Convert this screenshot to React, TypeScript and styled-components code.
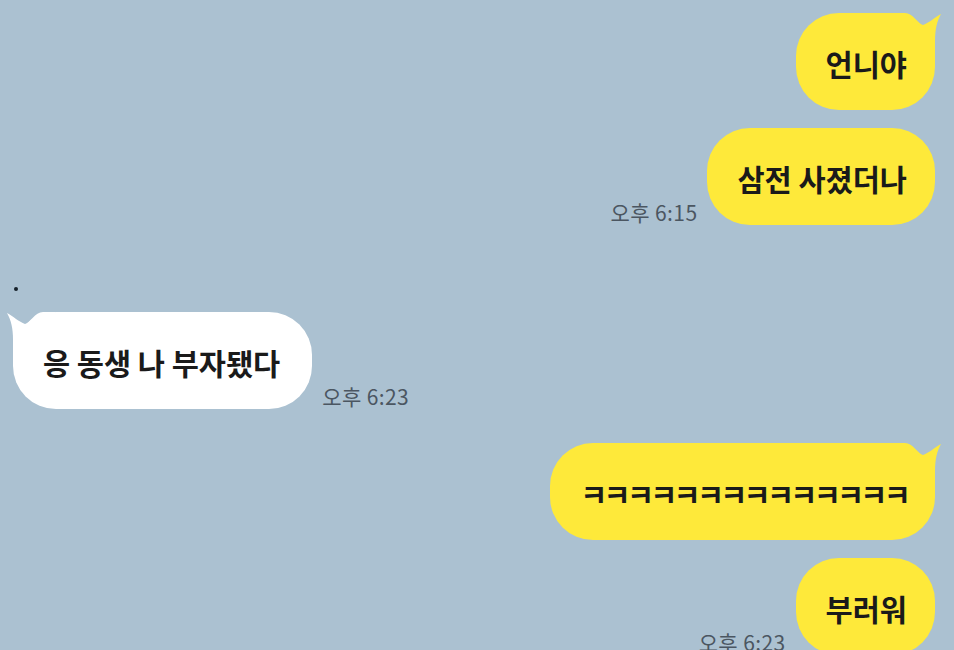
import React from "react";
import styled, { createGlobalStyle } from "styled-components";

const Global = createGlobalStyle`
  html, body { margin: 0; padding: 0; overflow: hidden; }
  body { background: #abc1d1; font-family: "Noto Sans CJK KR", "Noto Sans", sans-serif; }
`;

const Page = styled.div`
  width: 954px;
  box-sizing: border-box;
  padding: 13px 19px 0 13px;
  display: flex;
  flex-direction: column;
`;

const Group = styled.div<{ $mt: number }>`
  display: flex;
  flex-direction: column;
  flex-shrink: 0;
  gap: 18px;
  margin-top: ${(p) => p.$mt}px;
`;

const Row = styled.div<{ $mine: boolean }>`
  display: flex;
  flex-shrink: 0;
  flex-direction: ${(p) => (p.$mine ? "row-reverse" : "row")};
  align-items: flex-end;
  gap: 10px;
`;

const Bubble = styled.div<{ $mine: boolean; $tight?: boolean }>`
  position: relative;
  height: 97px;
  box-sizing: border-box;
  padding: ${(p) => (p.$mine ? "2px 28px 0 30px" : "2px 32px 0 30px")};
  display: flex;
  align-items: center;
  border-radius: 43px;
  background: ${(p) => (p.$mine ? "#fee93a" : "#ffffff")};
  color: #1a1a1a;
  font-size: 29.5px;
  font-weight: 700;
  white-space: nowrap;
  letter-spacing: ${(p) => (p.$tight ? "-3.8px" : "0")};
`;

const Label = styled.span`
  position: relative;
`;

const TailSvg = styled.svg<{ $mine: boolean }>`
  position: absolute;
  top: 0;
  width: 48px;
  height: 44px;
  ${(p) => (p.$mine ? "right: -6px;" : "left: -6px; transform: scaleX(-1);")}
`;

const Time = styled.span`
  font-size: 21px;
  line-height: 24px;
  letter-spacing: 0.4px;
  color: #4b5661;
  margin-bottom: 1px;
  white-space: nowrap;
`;

const Dot = styled.div`
  flex-shrink: 0;
  width: 4px;
  height: 4px;
  border-radius: 50%;
  background: #16202a;
  margin: 62px 0 21px 1px;
`;

function Tail({ mine }: { mine: boolean }) {
  return (
    <TailSvg $mine={mine} viewBox="0 0 48 44">
      <path
        d="M0 0 L12 0 C20 0 25 11 30 12 C36 10 42 4 48 1 C44 8 42 16 42 28 L42 44 L0 44 Z"
        fill={mine ? "#fee93a" : "#ffffff"}
      />
    </TailSvg>
  );
}

function Msg({
  mine,
  text,
  time,
  tail,
  tight,
}: {
  mine: boolean;
  text: string;
  time?: string;
  tail?: boolean;
  tight?: boolean;
}) {
  return (
    <Row $mine={mine}>
      <Bubble $mine={mine} $tight={tight}>
        {tail && <Tail mine={mine} />}
        <Label>{text}</Label>
      </Bubble>
      {time && <Time>{time}</Time>}
    </Row>
  );
}

export default function App() {
  return (
    <>
      <Global />
      <Page>
        <Group $mt={0}>
          <Msg mine text="언니야" tail />
          <Msg mine text="삼전 사졌더나" time="오후 6:15" />
        </Group>
        <Dot />
        <Group $mt={0}>
          <Msg mine={false} text="응 동생 나 부자됐다" time="오후 6:23" tail />
        </Group>
        <Group $mt={34}>
          <Msg mine text="ㅋㅋㅋㅋㅋㅋㅋㅋㅋㅋㅋㅋㅋㅋ" tail tight />
          <Msg mine text="부러워" time="오후 6:23" />
        </Group>
      </Page>
    </>
  );
}
